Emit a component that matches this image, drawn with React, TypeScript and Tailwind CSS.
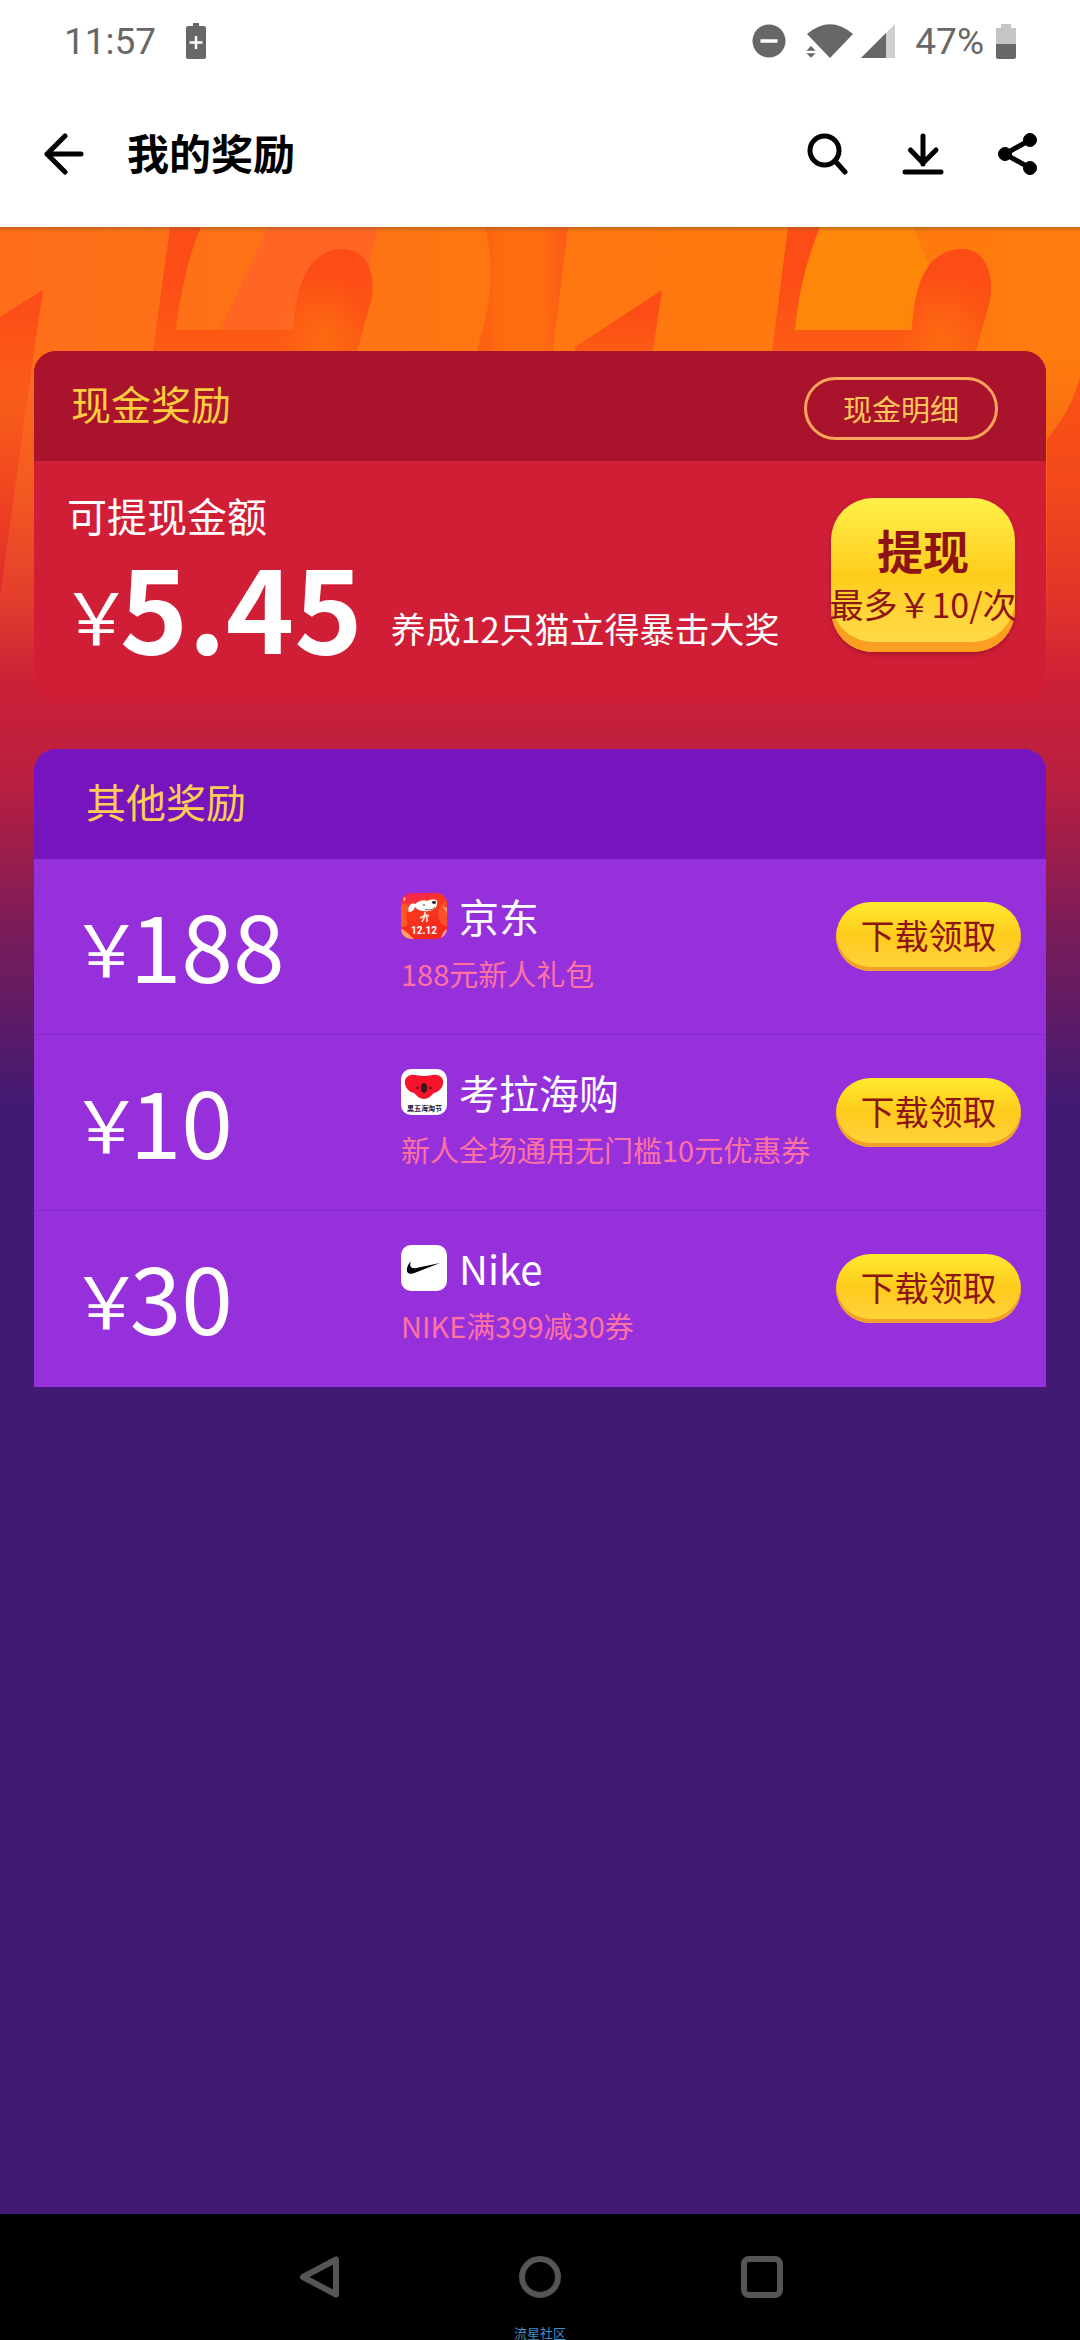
import React from "react";

interface Reward {
  id: string;
  amount: number;
  name: string;
  desc: string;
  icon: React.ReactNode;
}

const JdIcon = () => (
  <svg viewBox="0 0 46 46" className="w-[46px] h-[46px] shrink-0 rounded-[10px]" aria-hidden="true">
    <defs>
      <linearGradient id="jd-bg" x1="0" y1="0" x2="0.3" y2="1">
        <stop offset="0" stopColor="#f5196b" />
        <stop offset="0.35" stopColor="#fb3a1e" />
        <stop offset="1" stopColor="#f4291c" />
      </linearGradient>
    </defs>
    <rect width="46" height="46" fill="url(#jd-bg)" />
    <path d="M0 12C6 8 9 14 6 20S12 34 0 34z" fill="#fd5a22" />
    <path d="M46 8C38 10 34 22 40 30L46 34z" fill="#fb4f2c" />
    <path d="M2 5c3-2 4 1 1 4zM40 13c4 2 5 5 6 8v-6zM0 36c4 1 8 5 13 10H5C2 44 0 42 0 40z" fill="#ffa067" />
    <path d="M40 46c1-6 3-9 6-10v6z" fill="#ff8bb5" />
    <path d="M14 11c4-3 8-5 12-3 4-2 9-2 10 0 1 5-2 9-8 10-5 1-11 0-14-4-1 3-3 5-6 5-1-1-1-5 1-7 1-1 3-2 5-1z" fill="#fff" />
    <path d="M24 19l-1 6-2 4M24 21l2 4v4M23 23l-4 2M25 22l3 1" stroke="#ffe3d6" strokeWidth="1.600" fill="none" />
    <ellipse cx="33" cy="9.5" rx="2" ry="1.4" fill="#3b1418" />
    <circle cx="23" cy="12" r="0.8" fill="#3b1418" />
    <path d="M24 16.500c4 1 8 0 10-2" stroke="#3b1418" strokeWidth="0.7" fill="none" />
    <text x="23" y="41" textAnchor="middle" fontSize="10" fontWeight="700" fill="#fff" fontFamily="Roboto, sans-serif">
      12.12
    </text>
  </svg>
);

const KaolaIcon = () => (
  <svg viewBox="0 0 46 46" className="w-[46px] h-[46px] shrink-0 rounded-[10px]" aria-hidden="true">
    <rect width="46" height="46" fill="#fff" />
    <path
      d="M10 6c4-1 7 1 13 1s9-2 13-1c5 1 7 5 6 9-1 5-5 8-9 9-3 3-6 6-10 6s-7-3-10-6c-4-1-8-4-9-9-1-4 1-8 6-9z"
      fill="#f5142c"
    />
    <ellipse cx="23" cy="19" rx="3.2" ry="5" fill="#3c1a1c" />
    <circle cx="16.5" cy="19" r="1.3" fill="#5c1118" />
    <circle cx="29.5" cy="19" r="1.3" fill="#5c1118" />
    <text x="23.5" y="42" textAnchor="middle" fontSize="7" fontWeight="700" fill="#1d1747" fontFamily="'Noto Sans CJK SC', sans-serif">
      黑五海淘节
    </text>
  </svg>
);

const NikeIcon = () => (
  <svg viewBox="0 0 46 46" className="w-[46px] h-[46px] shrink-0 rounded-[10px]" aria-hidden="true">
    <rect width="46" height="46" fill="#fff" />
    <path d="M39 18L14 27.800C9 30 5.500 28.500 5.800 24.500 6 21.500 8 18.500 9.800 16.300 8.500 20 9 23.800 14 23.300z" fill="#000" />
  </svg>
);

const rewards: Reward[] = [
  { id: "jd", amount: 188, name: "京东", desc: "188元新人礼包", icon: <JdIcon /> },
  { id: "kaola", amount: 10, name: "考拉海购", desc: "新人全场通用无门槛10元优惠券", icon: <KaolaIcon /> },
  { id: "nike", amount: 30, name: "Nike", desc: "NIKE满399减30券", icon: <NikeIcon /> },
];

function StatusBar() {
  return (
    <div className="flex h-[82px] items-center justify-between pl-16 pr-16 font-[Roboto,sans-serif] text-[37px] leading-none text-[#676767]">
      <div className="flex items-center gap-[30px]">
        <span>11:57</span>
        <svg width="20" height="36" viewBox="0 0 20 36" fill="#676767" aria-hidden="true">
          <path d="M7 0h6v3h5a2 2 0 0 1 2 2v29a2 2 0 0 1-2 2H2a2 2 0 0 1-2-2V5a2 2 0 0 1 2-2h5z" />
          <path d="M10 13v13M3.500 19.500h13" stroke="#fff" strokeWidth="2.500" />
        </svg>
      </div>
      <div className="flex items-center">
        <svg width="34" height="34" viewBox="0 0 34 34" aria-hidden="true">
          <circle cx="17" cy="17" r="16.500" fill="#676767" />
          <path d="M8.500 17h17" stroke="#fff" strokeWidth="3.500" />
        </svg>
        <svg className="ml-5" width="47" height="34" viewBox="0 0 47 34" fill="#676767" aria-hidden="true">
          <path d="M1 10Q24-9.500 47 10L24 34z" />
          <path d="M0 27l5-5.500 5 5.500zM0 29l5 5 5-5z" stroke="#fff" strokeWidth="0.500" />
        </svg>
        <svg className="ml-2" width="34" height="34" viewBox="0 0 34 34" aria-hidden="true">
          <path d="M0 34L34 0v34z" fill="#d0d0d0" />
          <path d="M0 34L25 9v25z" fill="#676767" />
        </svg>
        <span className="ml-5">47%</span>
        <svg className="ml-3" width="20" height="35" viewBox="0 0 20 35" aria-hidden="true">
          <path d="M5 0h10v4h5v16H0V4h5z" fill="#c5c5c5" />
          <path d="M0 20h20v13a2 2 0 0 1-2 2H2a2 2 0 0 1-2-2z" fill="#676767" />
        </svg>
      </div>
    </div>
  );
}

function TitleBar() {
  return (
    <header className="flex h-[145px] items-center bg-white pl-[43px] pr-[41px] pb-0.5 text-black">
      <button type="button" aria-label="返回">
        <svg width="42" height="42" viewBox="0 0 42 42" fill="none" stroke="currentColor" strokeWidth="5" strokeLinecap="round" strokeLinejoin="round">
          <path d="M38 21H4M22 3L4 21l18 18" />
        </svg>
      </button>
      <h1 className="ml-[42px] pb-1 text-[42px] leading-[60px] font-bold">我的奖励</h1>
      <div className="ml-auto flex items-center gap-[53px]">
        <button type="button" aria-label="搜索">
          <svg width="42" height="42" viewBox="0 0 42 42" fill="none" stroke="currentColor" strokeWidth="5" strokeLinecap="round">
            <circle cx="17.500" cy="17.500" r="14.500" />
            <path d="M29 29l9 10" />
          </svg>
        </button>
        <button type="button" aria-label="下载">
          <svg width="42" height="42" viewBox="0 0 42 42" fill="none" stroke="currentColor" strokeWidth="5" strokeLinecap="round" strokeLinejoin="round">
            <path d="M21 3v28M8.500 17L21 30l13-13M3 39h36" />
          </svg>
        </button>
        <button type="button" aria-label="分享">
          <svg width="42" height="42" viewBox="0 0 42 42" fill="currentColor" stroke="currentColor">
            <path d="M33 7L8 21l25 14" fill="none" strokeWidth="5" />
            <circle cx="33" cy="7" r="6.500" />
            <circle cx="8" cy="21" r="6.500" />
            <circle cx="33" cy="35" r="6.500" />
          </svg>
        </button>
      </div>
    </header>
  );
}

// Promo artwork behind the cards, it fades into the page purple
function Backdrop() {
  return (
    <svg className="absolute inset-x-0 top-0 h-[880px] w-full" viewBox="0 0 1080 880" preserveAspectRatio="none" aria-hidden="true">
      <defs>
        <linearGradient id="base">
          <stop offset="0" stopColor="#ff6d1a" />
          <stop offset="0.5" stopColor="#fe7711" />
          <stop offset="1" stopColor="#fe7b0e" />
        </linearGradient>
        <linearGradient id="arch" x1="0" y1="0" x2="0" y2="1">
          <stop offset="0" stopColor="#fd4d16" />
          <stop offset="0.4" stopColor="#fd4d16" />
          <stop offset="1" stopColor="#fc5c14" />
        </linearGradient>
        <linearGradient id="gap">
          <stop offset="0" stopColor="#fd5d13" />
          <stop offset="0.3" stopColor="#fd6d0f" />
          <stop offset="0.7" stopColor="#fd6c10" />
          <stop offset="1" stopColor="#fc5a15" />
        </linearGradient>
        <radialGradient id="glow">
          <stop offset="0" stopColor="#fd7210" stopOpacity="0.700" />
          <stop offset="0.5" stopColor="#fd7210" stopOpacity="0.350" />
          <stop offset="1" stopColor="#fd7210" stopOpacity="0" />
        </radialGradient>
        <linearGradient id="side" x1="0" y1="0" x2="0" y2="1">
          <stop offset="0" stopColor="#fd4a18" />
          <stop offset="0.4" stopColor="#fb6216" />
          <stop offset="1" stopColor="#fa3f1c" />
        </linearGradient>
        <linearGradient id="fade" x1="0" y1="0" x2="0" y2="1">
          <stop offset="0.15" stopColor="#d01f38" stopOpacity="0" />
          <stop offset="0.3" stopColor="#d01f38" stopOpacity="0.250" />
          <stop offset="0.42" stopColor="#d01f38" stopOpacity="0.600" />
          <stop offset="0.52" stopColor="#cc2039" />
          <stop offset="0.63" stopColor="#b91f40" />
          <stop offset="0.8" stopColor="#7a1c59" />
          <stop offset="1" stopColor="#411a73" />
        </linearGradient>
        <linearGradient id="edge" x1="0" y1="0" x2="0" y2="1">
          <stop offset="0" stopColor="#8a5a20" stopOpacity="0.500" />
          <stop offset="1" stopColor="#8a5a20" stopOpacity="0" />
        </linearGradient>
      </defs>
      <rect width="1080" height="880" fill="url(#base)" />
      <path d="M43 63L0 90V370L34 124z" fill="url(#side)" />
      <path d="M268 0H378L364 60 293 103H220z" fill="#ff6624" />
      <path d="M170 0H201C186 36 180 70 176 103H293C296 52 312 22 342 22C370 22 376 52 371 74L357 124H153z" fill="url(#arch)" />
      <ellipse cx="322" cy="112" rx="44" ry="66" fill="url(#glow)" />
      <path d="M485 0C496 46 490 78 477 124H553L568 0z" fill="url(#gap)" />
      <path d="M662 63L575 120V124H653z" fill="url(#arch)" />
      <path d="M820 0H913L930 40 912 103H795C798 68 806 34 820 0z" fill="#fe880a" />
      <path d="M788 0H820C806 34 798 68 795 103H912C914 52 930 22 962 22C988 22 994 52 990 74L976 124H772z" fill="url(#arch)" />
      <ellipse cx="942" cy="112" rx="44" ry="66" fill="url(#glow)" />
      <path d="M1080 150C1072 180 1060 196 1047 212V480H1080z" fill="#fd5513" />
      <rect width="1080" height="880" fill="url(#fade)" />
      <rect width="1080" height="5" fill="url(#edge)" />
    </svg>
  );
}

function CashCard() {
  return (
    <section className="overflow-hidden rounded-[22px] bg-[#d11e37]">
      <div className="flex h-[110px] items-start justify-between bg-[#a9132b] pt-[26px] pr-12 pl-[37px]">
        <h2 className="text-[40px] leading-[52px] text-[#ffce3f]">现金奖励</h2>
        <button type="button" className="h-[63px] w-[194px] rounded-full border-3 border-[#fda55c] text-[29px] leading-none text-[#ffc758]">
          现金明细
        </button>
      </div>
      <div className="flex h-[242px] items-start justify-between pr-[31px] pl-[33px]">
        <div className="pt-7 text-white">
          <p className="text-[40px] leading-[52px]">可提现金额</p>
          <p className="mt-1 flex items-end pl-0.5 whitespace-nowrap">
            <span className="-mr-1 text-[72px] leading-[94px] [font-feature-settings:'palt']">￥</span>
            <span className="text-[116px] leading-none font-bold">5.45</span>
            <span className="ml-7 text-[35px] leading-[66px]">养成12只猫立得暴击大奖</span>
          </p>
        </div>
        <button
          type="button"
          className="mt-[37px] flex h-[154px] w-[184px] shrink-0 flex-col items-center rounded-[42px] bg-linear-to-b from-[#fff048] via-[#ffcd18] to-[#ffdb4c] pt-6 whitespace-nowrap text-[#8d1412] shadow-[inset_0_-10px_0_#fb9f20,0_2px_5px_#a3152c]"
        >
          <span className="text-[46px] leading-[54px] font-bold">提现</span>
          <span className="text-[34px] leading-[56px]">最多￥10/次</span>
        </button>
      </div>
    </section>
  );
}

function RewardRow({ reward }: { reward: Reward }) {
  return (
    <li className="flex h-44 items-start border-b border-[#8728cb] pr-[25px] pl-[45px] last:border-b-0">
      <p className="flex w-[322px] shrink-0 items-end pt-[37px] text-white">
        <span className="-mr-1 text-[72px] leading-[86px] [font-feature-settings:'palt']">￥</span>
        <span className="text-[93px] leading-none">{reward.amount}</span>
      </p>
      <div className="pt-[34px] whitespace-nowrap">
        <div className="flex h-[46px] items-center gap-3">
          {reward.icon}
          <h3 className="text-[40px] leading-[46px] text-white">{reward.name}</h3>
        </div>
        <p className="mt-3 text-[29px] leading-[44px] text-[#fd72a3]">{reward.desc}</p>
      </div>
      <button
        type="button"
        className="mt-[43px] ml-auto h-[69px] w-[185px] shrink-0 rounded-full bg-linear-to-b from-[#ffe92e] via-[#ffca1c] to-[#ffd43a] pb-1 text-[34px] leading-none text-[#8d1412] shadow-[inset_0_-4px_0_#f2a02c]"
      >
        下载领取
      </button>
    </li>
  );
}

function NavBar() {
  return (
    <nav className="flex h-[126px] flex-col items-center justify-between bg-black pt-[42px]">
      <div className="flex items-center gap-[180px]">
        <button type="button" aria-label="返回">
          <svg width="42" height="42" viewBox="0 0 42 42" fill="none" stroke="#555" strokeWidth="6" strokeLinejoin="round">
            <path d="M39 3.500v35L6 21z" />
          </svg>
        </button>
        <button type="button" aria-label="主页">
          <svg width="42" height="42" viewBox="0 0 42 42" fill="none" stroke="#555" strokeWidth="6">
            <circle cx="21" cy="21" r="18" />
          </svg>
        </button>
        <button type="button" aria-label="最近任务">
          <svg width="42" height="42" viewBox="0 0 42 42" fill="none" stroke="#555" strokeWidth="6">
            <rect x="3" y="3" width="36" height="36" rx="5" />
          </svg>
        </button>
      </div>
      <small className="text-[13px] leading-[14px] text-[#3d8fd0]">流星社区</small>
    </nav>
  );
}

export default function App() {
  return (
    <div className="flex min-h-screen flex-col bg-white font-['Noto_Sans_CJK_SC',sans-serif]">
      <StatusBar />
      <TitleBar />
      <main className="relative flex-1 bg-[#411a73]">
        <Backdrop />
        <div className="relative px-[34px] pt-[124px]">
          <CashCard />
          <section className="mt-[46px] overflow-hidden rounded-t-[22px] bg-[#9630db]">
            <div className="h-[110px] bg-[#7615bd] pt-[26px] pl-[52px]">
              <h2 className="text-[40px] leading-[52px] text-[#ffcc55]">其他奖励</h2>
            </div>
            <ul>
              {rewards.map((reward) => (
                <RewardRow key={reward.id} reward={reward} />
              ))}
            </ul>
          </section>
        </div>
      </main>
      <NavBar />
    </div>
  );
}
